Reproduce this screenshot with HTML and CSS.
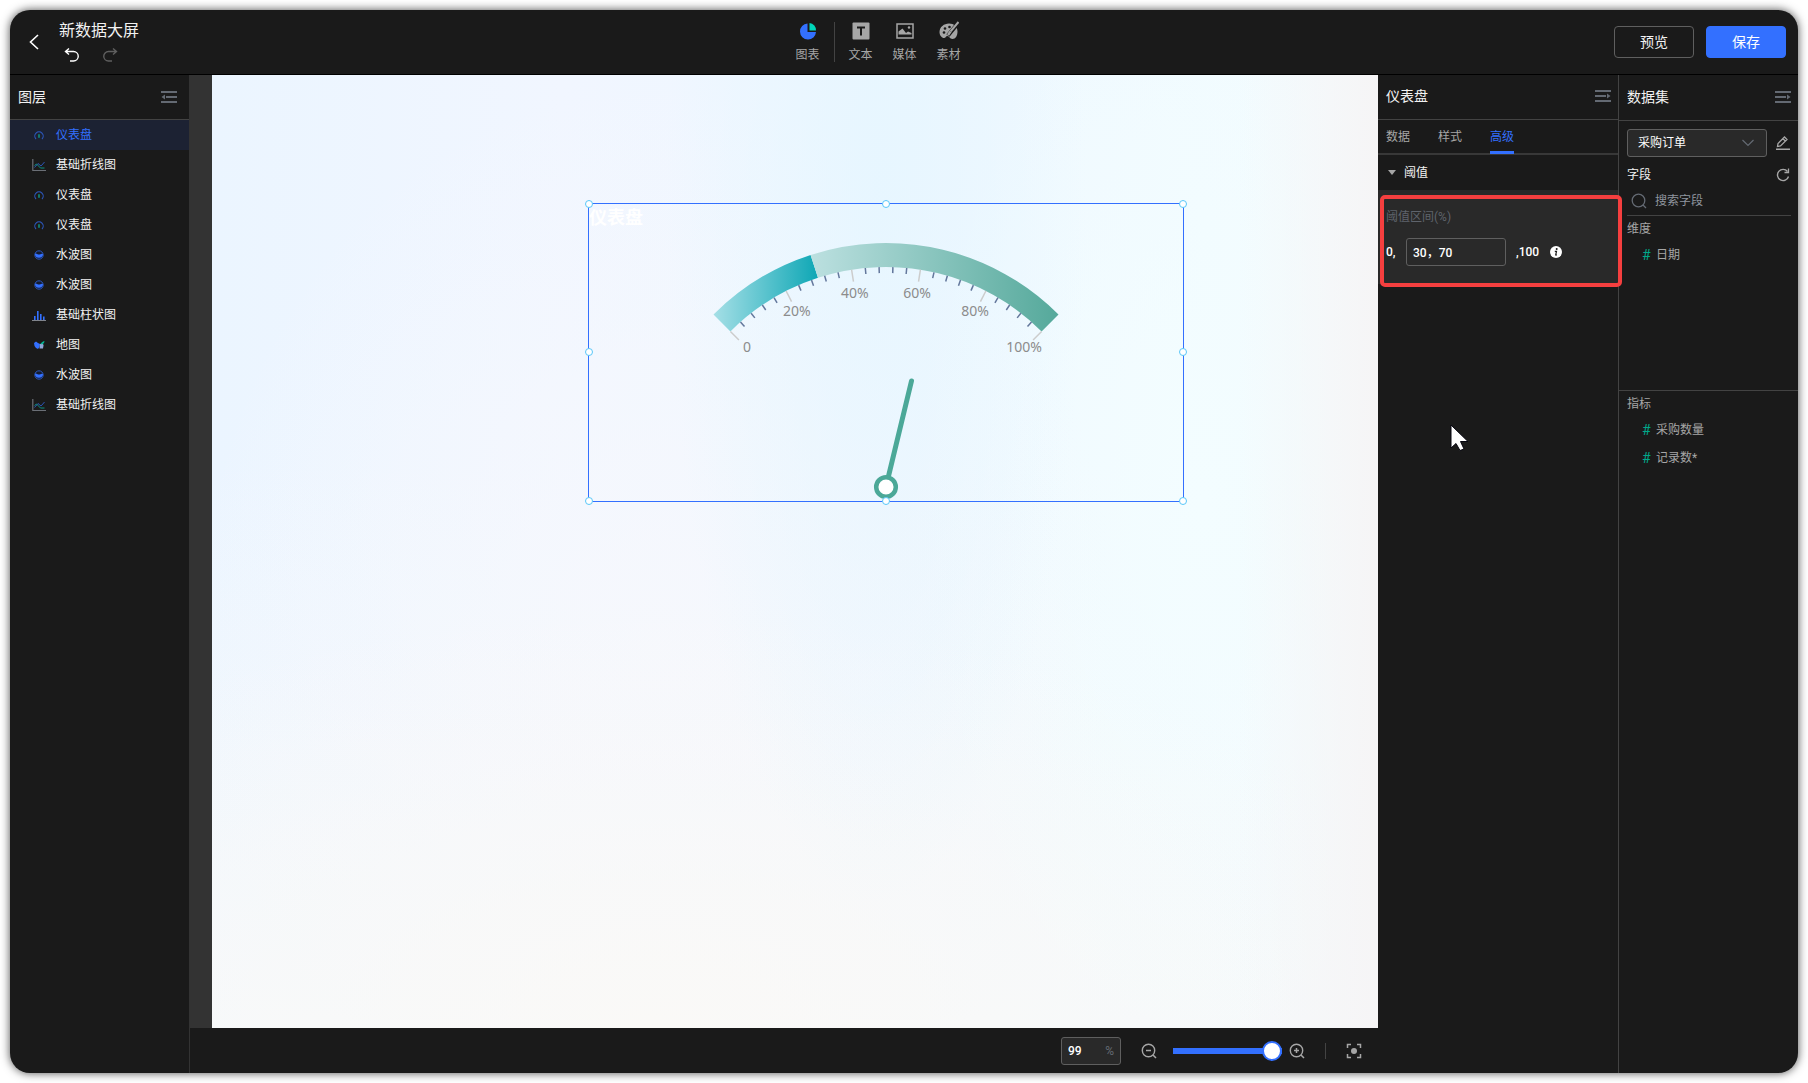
FILE: index.html
```html
<!DOCTYPE html>
<html lang="zh-CN">
<head>
<meta charset="utf-8">
<title>新数据大屏</title>
<link rel="stylesheet" href="styles.css">
</head>
<body>
<svg class="sprite" aria-hidden="true">
  <defs>
    <symbol id="i-gauge" viewBox="0 0 14 14"><path d="M4 11A4.200 4.200 0 1 1 10 11" fill="none" stroke="#2c58c0" stroke-width="1.100"/><path d="M6.200 6.200h1.600v3.500H6.200z" fill="#0f8f80"/></symbol>
    <symbol id="i-line" viewBox="0 0 14 14"><path d="M.8 1v11.500H14" fill="none" stroke="#6b6f76" stroke-width="1.200"/><path d="M2.500 9.500 6 5.500l3 2.500L12.500 4" fill="none" stroke="#2c56b8"/><path d="M2.500 7.500 4.500 6l4 4h4" fill="none" stroke="#0f8f80"/></symbol>
    <symbol id="i-water" viewBox="0 0 14 14"><circle cx="7" cy="7" r="4.200" fill="#141c33" stroke="#2c56b8"/><path d="M3 5.500c2-.5 2.500 1.500 4.500 1S10 5.500 11 6A4 4 0 1 1 3 5.500z" fill="#3370ff"/></symbol>
    <symbol id="i-bar" viewBox="0 0 14 14"><path d="M2 8h1.600v4H2zM5 3h1.600v9H5zM8 6h1.600v6H8zM11 8.500h1.600V12H11z" fill="#3370ff"/><path d="M0 12.500h14" stroke="#80848c"/></symbol>
    <symbol id="i-map" viewBox="0 0 14 14"><path d="M2 5l2-1.500 2 1.500 2 1-.5 3-1.500 2-2-1L2.500 8z" fill="#3370ff"/><path d="M8 6l3-.5.500 2-.5 3H7.500z" fill="#8fa8d8"/><path d="M8.500 5.500 11 3.500l1.500-.5-.5 2-2 1.500z" fill="#00b894"/></symbol>
    <symbol id="i-fold" viewBox="0 0 16 14"><path d="M0 2h16M5 7h11M0 12h16" stroke="#646a73" stroke-width="2"/><path d="M.5 7l3.500-2.500v5z" fill="#646a73"/></symbol>
    <symbol id="i-unfold" viewBox="0 0 16 14"><path d="M0 2h16M0 7h11M0 12h16" stroke="#646a73" stroke-width="2"/><path d="M15.500 7 12 4.500v5z" fill="#646a73"/></symbol>
  </defs>
</svg>
<div class="app">
  <header class="topbar">
    <div class="topbar-left">
      <button class="icon-btn" aria-label="返回"><svg width="12" height="18" viewBox="0 0 12 18"><path d="M10 2 2.500 9l7.500 7" fill="none" stroke="#fff" stroke-width="1.600"/></svg></button>
      <div class="title-block">
        <h1>新数据大屏</h1>
        <div class="history">
          <button class="icon-btn" aria-label="撤销"><svg width="16" height="16" viewBox="0 0 16 16"><path d="M5 1.500 1.500 4.500 5 7.500M1.500 4.500H9.500a4.700 4.700 0 0 1 0 9.500H6" fill="none" stroke="#fff" stroke-width="1.400"/></svg></button>
          <button class="icon-btn" aria-label="重做"><svg width="16" height="16" viewBox="0 0 16 16"><path d="M11 1.500 14.500 4.500 11 7.500M14.500 4.500H6.500a4.700 4.700 0 0 0 0 9.500H10" fill="none" stroke="#5f5f5f" stroke-width="1.400"/></svg></button>
        </div>
      </div>
    </div>
    <nav class="tools">
      <button class="tool"><svg width="20" height="20" viewBox="0 0 20 20"><path d="M9.500 2.500a8 8 0 1 0 8.500 8.500H9.500z" fill="#3370ff"/><path d="M11.500 2v7.500H18A7 7 0 0 0 11.500 2z" fill="#00d6b9"/></svg>图表</button>
      <span class="tools-divider"></span>
      <button class="tool"><svg width="20" height="20" viewBox="0 0 20 20"><rect x="1.500" y="1.500" width="17" height="17" rx="1" fill="#a6a6a6"/><path d="M6 6.500h8M10 6.500V14.500" stroke="#1a1a1a" stroke-width="2"/></svg>文本</button>
      <button class="tool"><svg width="20" height="20" viewBox="0 0 20 20"><rect x="2" y="3" width="16" height="14" fill="none" stroke="#a6a6a6" stroke-width="1.500"/><path d="M3.500 13.500V10.500L7.500 7.500l3.500 4.500 2-1.500 3.500 1.500v1.500z" fill="#a6a6a6"/><circle cx="14" cy="6.500" r="1.200" fill="#a6a6a6"/></svg>媒体</button>
      <button class="tool"><svg width="20" height="20" viewBox="0 0 20 20"><path d="M10 2.500C5 2.500.500 6 .500 11c0 3.500 2.500 6 4.500 6s1.500-2 3.500-2 2 3 5 3c3 0 5-3 5-7.500S15 2.500 10 2.500z" fill="#a6a6a6"/><path d="M20 1 11 12l-2 2.500" stroke="#1a1a1a" stroke-width="4"/><path d="M19.500 1 11.500 10.500" stroke="#a6a6a6" stroke-width="2"/><path d="M11.500 10.500 9 14" stroke="#a6a6a6" stroke-width="2.500"/><circle cx="5" cy="11.500" r="1.300" fill="#1a1a1a"/><circle cx="6" cy="7.500" r="1.300" fill="#1a1a1a"/><circle cx="10.500" cy="6" r="1.300" fill="#1a1a1a"/></svg>素材</button>
    </nav>
    <div class="actions">
      <button class="btn">预览</button>
      <button class="btn btn-primary">保存</button>
    </div>
  </header>

  <div class="body">
    <aside class="panel layers">
      <div class="panel-head"><h2>图层</h2><button class="icon-btn" aria-label="收起图层"><svg width="16" height="14"><use href="#i-fold"/></svg></button></div>
      <ul class="layer-list">
        <li class="active"><svg width="14" height="14"><use href="#i-gauge"/></svg>仪表盘</li>
        <li><svg width="14" height="14"><use href="#i-line"/></svg>基础折线图</li>
        <li><svg width="14" height="14"><use href="#i-gauge"/></svg>仪表盘</li>
        <li><svg width="14" height="14"><use href="#i-gauge"/></svg>仪表盘</li>
        <li><svg width="14" height="14"><use href="#i-water"/></svg>水波图</li>
        <li><svg width="14" height="14"><use href="#i-water"/></svg>水波图</li>
        <li><svg width="14" height="14"><use href="#i-bar"/></svg>基础柱状图</li>
        <li><svg width="14" height="14"><use href="#i-map"/></svg>地图</li>
        <li><svg width="14" height="14"><use href="#i-water"/></svg>水波图</li>
        <li><svg width="14" height="14"><use href="#i-line"/></svg>基础折线图</li>
      </ul>
    </aside>

    <main class="stage">
      <div class="stage-view">
        <div class="canvas">
          <section class="chart">
            <h3>仪表盘</h3>
            <svg class="gauge" viewBox="0 0 596 299" role="img" aria-label="仪表盘">
              <defs>
                <linearGradient id="g1"><stop offset="0" stop-color="#a5dfe6"/><stop offset="1" stop-color="#0ea7b5"/></linearGradient>
                <linearGradient id="g2"><stop offset="0" stop-color="#bce0e0"/><stop offset="1" stop-color="#55a99b"/></linearGradient>
              </defs>
              <g transform="translate(298 284)">
                <path d="M-172.500-172.500A244 244 0 0 1-75.400-232.100L-68-209.200A220 220 0 0 0-155.600-155.600z" fill="url(#g1)"/>
                <path d="M-75.400-232.100A244 244 0 0 1 172.500-172.500L155.600-155.600A220 220 0 0 0-68-209.200z" fill="url(#g2)"/>
                <g id="ticks"></g>
                <g class="gauge-labels">
                  <text x="-143" y="-135">0</text>
                  <text x="-103" y="-171">20%</text>
                  <text x="-45" y="-189">40%</text>
                  <text class="end" x="45" y="-189">60%</text>
                  <text class="end" x="103" y="-171">80%</text>
                  <text class="end" x="156" y="-135">100%</text>
                </g>
                <path d="M2.700-11.700 25.500-106" stroke="#4ba898" stroke-width="5" stroke-linecap="round"/>
                <circle r="9.800" fill="#fff" stroke="#4ba898" stroke-width="4.500"/>
              </g>
            </svg>
            <i class="handle n w"></i><i class="handle n c"></i><i class="handle n e"></i>
            <i class="handle m w"></i><i class="handle m e"></i>
            <i class="handle s w"></i><i class="handle s c"></i><i class="handle s e"></i>
          </section>
        </div>
      </div>
      <footer class="zoombar">
        <label class="zoom-field"><input type="text" value="99" aria-label="缩放比例"><span>%</span></label>
        <button class="icon-btn" aria-label="缩小"><svg width="16" height="16" viewBox="0 0 16 16"><circle cx="7.500" cy="7.500" r="6.200" fill="none" stroke="#a6a6a6" stroke-width="1.400"/><path d="M5 7.500h5M12 12l3 3" stroke="#a6a6a6" stroke-width="1.500"/></svg></button>
        <input class="zoom-range" type="range" min="10" max="100" value="100" aria-label="缩放">
        <button class="icon-btn" aria-label="放大"><svg width="16" height="16" viewBox="0 0 16 16"><circle cx="7.500" cy="7.500" r="6.200" fill="none" stroke="#a6a6a6" stroke-width="1.400"/><path d="M5 7.500h5M7.500 5v5M12 12l3 3" stroke="#a6a6a6" stroke-width="1.500"/></svg></button>
        <span class="zoom-divider"></span>
        <button class="icon-btn" aria-label="适应画布"><svg width="16" height="16" viewBox="0 0 16 16"><path d="M1.500 5V1.500H5M11 1.500h3.500V5M14.500 11v3.500H11M5 14.500H1.500V11" fill="none" stroke="#a6a6a6" stroke-width="1.500"/><circle cx="8" cy="8" r="3" fill="#a6a6a6"/></svg></button>
      </footer>
    </main>

    <aside class="panel props">
      <div class="panel-head"><h2>仪表盘</h2><button class="icon-btn" aria-label="收起属性"><svg width="16" height="14"><use href="#i-unfold"/></svg></button></div>
      <div class="tabs" role="tablist">
        <button role="tab">数据</button>
        <button role="tab">样式</button>
        <button role="tab" class="active" aria-selected="true">高级</button>
      </div>
      <button class="group-head"><i class="caret"></i>阈值</button>
      <div class="group-body">
        <label for="range">阈值区间(%)</label>
        <div class="range-row">
          <span>0,</span>
          <input id="range" type="text" value="30，70">
          <span>,100</span>
          <svg width="12" height="12" viewBox="0 0 12 12"><circle cx="6" cy="6" r="6" fill="#fff"/><circle cx="6.700" cy="3" r="1" fill="#1a1a1a"/><path d="M4.800 5.300h1.700L5.700 9h1.300" fill="none" stroke="#1a1a1a" stroke-width="1.200"/></svg>
        </div>
        <div class="callout"></div>
      </div>
    </aside>

    <aside class="panel dataset">
      <div class="panel-head"><h2>数据集</h2><button class="icon-btn" aria-label="收起数据集"><svg width="16" height="14"><use href="#i-unfold"/></svg></button></div>
      <div class="source-row">
        <div class="select">
          <select aria-label="数据集"><option>采购订单</option></select>
          <svg width="12" height="8" viewBox="0 0 12 8"><path d="M.5 1 6 6.500 11.500 1" fill="none" stroke="#646a73" stroke-width="1.200"/></svg>
        </div>
        <button class="icon-btn" aria-label="编辑"><svg width="14" height="14" viewBox="0 0 14 14"><path d="M0 13.200h14" stroke="#a6a6a6" stroke-width="1.500"/><path d="M1.500 10.500 2 7.500 8.500 1l2.500 2.500L4.500 10zM7 2.800l2.500 2.400" fill="none" stroke="#a6a6a6" stroke-width="1.300"/></svg></button>
      </div>
      <div class="field-row">
        <span>字段</span>
        <button class="icon-btn" aria-label="刷新"><svg width="14" height="14" viewBox="0 0 14 14"><path d="M11.500 3.500A5.600 5.600 0 1 0 12.500 8.500" fill="none" stroke="#a6a6a6" stroke-width="1.400"/><path d="M8.500 4.500h4V.500" fill="none" stroke="#a6a6a6" stroke-width="1.300"/></svg></button>
      </div>
      <div class="search">
        <svg width="16" height="16" viewBox="0 0 16 16"><circle cx="7.500" cy="7.500" r="6.300" fill="none" stroke="#646a73" stroke-width="1.300"/><path d="m12 12 3 3" stroke="#646a73" stroke-width="1.300"/></svg>
        <input type="text" placeholder="搜索字段" aria-label="搜索字段">
      </div>
      <section class="fields dims">
        <h3>维度</h3>
        <ul><li><b>#</b>日期</li></ul>
      </section>
      <section class="fields metrics">
        <h3>指标</h3>
        <ul><li><b>#</b>采购数量</li><li><b>#</b>记录数*</li></ul>
      </section>
    </aside>
  </div>
</div>
<svg class="pointer" width="18" height="28" viewBox="0 0 18 28" aria-hidden="true"><path d="M1 1v23l5-4.500 4 7 4-1.500-3.500-7.500H18z" fill="#fff" stroke="#05050f"/></svg>
<script src="gauge.js"></script>
</body>
</html>
```
FILE: styles.css
```css
* { box-sizing: border-box; }

body {
  margin: 0;
  padding: 10px;
  height: 100vh;
  background: #fff;
  color: #f2f2f2;
  font: 12px/20px Roboto, "Noto Sans CJK SC", sans-serif;
}

h1, h2, h3, ul { margin: 0; padding: 0; font-weight: 400; list-style: none; }
button, input, select { font: inherit; color: inherit; }
button { background: none; border: 0; padding: 0; }
svg { display: block; flex: none; }

.sprite { position: absolute; width: 0; height: 0; }

.app {
  height: 100%;
  display: flex;
  flex-direction: column;
  background: #1a1a1a;
  border-radius: 20px;
  overflow: hidden;
  box-shadow: 0 0 10px rgba(0, 0, 0, .7);
}

/* Top bar */
.topbar {
  flex: none;
  height: 65px;
  display: grid;
  grid-template-columns: 1fr auto 1fr;
  align-items: center;
  padding: 0 12px 0 18px;
  border-bottom: 1px solid #000;
}
.topbar-left { display: flex; align-items: center; gap: 19px; }
.title-block { padding-bottom: 2px; }
.title-block h1 { font-size: 16px; line-height: 24px; }
.history { display: flex; gap: 22px; padding: 4px 5px 0; }
.tools { display: flex; align-items: center; padding-right: 58px; gap: 20px; }
.tool {
  width: 24px;
  display: flex;
  flex-direction: column;
  align-items: center;
  gap: 4px;
  padding-top: 2px;
  color: #a6a6a6;
  white-space: nowrap;
}
.tools-divider { width: 1px; height: 40px; margin: 0 -6px; background: #434343; }
.actions { display: flex; justify-content: flex-end; gap: 12px; }
.btn {
  width: 80px;
  height: 32px;
  border: 1px solid #5f5f5f;
  border-radius: 4px;
  font-size: 14px;
}
.btn-primary { background: #3370ff; border-color: #3370ff; color: #fff; }

/* Columns */
.body { flex: 1; min-height: 0; display: flex; }
.panel { flex: none; }
.panel-head {
  height: 45px;
  display: flex;
  align-items: center;
  justify-content: space-between;
  padding: 0 8px;
  border-bottom: 1px solid #434343;
}
.panel-head h2 { font-size: 14px; }

/* Layers */
.layers { width: 180px; border-right: 1px solid #333; }
.layers .panel-head { padding-right: 12px; }
.layer-list li {
  height: 30px;
  display: flex;
  align-items: center;
  gap: 10px;
  padding-left: 22px;
}
.layer-list .active { background: #1c2233; color: #3370ff; }

/* Canvas */
.stage { flex: 1; min-width: 0; display: flex; flex-direction: column; }
.stage-view { flex: 1; min-height: 0; display: flex; padding-left: 22px; background: #333; }
.canvas {
  position: relative;
  flex: 1;
  background:
    radial-gradient(ellipse 18% 75% at 57% 12%, rgba(230, 246, 255, .9), rgba(230, 246, 255, 0)),
    linear-gradient(to right, rgba(246, 245, 246, 0) 88%, #f6f5f6),
    radial-gradient(ellipse 70% 45% at 38% 100%, #faf9f7, rgba(250, 249, 247, 0)),
    radial-gradient(ellipse 40% 60% at 38% 60%, #f6f8fd, rgba(246, 248, 253, 0)),
    radial-gradient(ellipse 25% 60% at 85% 45%, #f3fdff, rgba(243, 253, 255, 0)),
    linear-gradient(to bottom, rgba(245, 249, 252, 0) 40%, #f5f9fc),
    linear-gradient(to right, #ebf5ff, #f1f6ff 30%, #eef7ff 60%, #f1fbff 85%, #f4fcff);
}
.chart {
  position: absolute;
  left: 376px;
  top: 128px;
  width: 596px;
  height: 299px;
  border: 1px solid #3370ff;
}
.chart h3 {
  position: absolute;
  left: 0;
  top: 0;
  font-size: 18px;
  line-height: 28px;
  font-weight: 700;
  color: #fff;
}
.gauge { position: absolute; left: -1px; top: -1px; width: 596px; height: 299px; }
.gauge-labels { font: 14px "Noto Sans", sans-serif; fill: #8c8c8c; }
.gauge-labels .end { text-anchor: end; }
.tick { stroke: #63779c; stroke-width: 1.5; }
.split { stroke: #ccc; stroke-width: 1.5; }

.handle {
  position: absolute;
  width: 8px;
  height: 8px;
  border: 1px solid #59c7f9;
  border-radius: 50%;
  background: #fff;
}
.handle.n { top: -4px; }
.handle.m { top: calc(50% - 5px); }
.handle.s { bottom: -4px; }
.handle.w { left: -4px; }
.handle.c { left: calc(50% - 4px); }
.handle.e { right: -4px; }

/* Zoom bar */
.zoombar {
  flex: none;
  height: 45px;
  display: flex;
  align-items: center;
  justify-content: flex-end;
  padding-right: 16px;
}
.zoom-field {
  width: 60px;
  height: 28px;
  display: flex;
  align-items: center;
  justify-content: space-between;
  margin-right: 20px;
  padding: 0 6px;
  background: #292929;
  border: 1px solid #5f5f5f;
  border-radius: 3px;
  color: #646a73;
}
.zoom-field input {
  width: 30px;
  padding: 0;
  border: 0;
  background: none;
  color: #fff;
  font-weight: 500;
}
.zoom-range {
  appearance: none;
  width: 109px;
  height: 20px;
  margin: 0 7px 0 16px;
  background: linear-gradient(#3370ff, #3370ff) center / 100% 6px no-repeat;
  border-radius: 3px;
}
.zoom-range::-webkit-slider-thumb {
  appearance: none;
  width: 20px;
  height: 20px;
  border: 2px solid #3370ff;
  border-radius: 50%;
  background: #fff;
}
.zoom-divider { width: 1px; height: 16px; margin: 0 20px; background: #434343; }

/* Properties */
.props { width: 241px; border-right: 1px solid #434343; }
.props .panel-head { padding: 0 7px 3px 8px; }
.tabs {
  height: 35px;
  display: flex;
  gap: 28px;
  padding: 0 8px;
  border-bottom: 2px solid #383838;
  color: #a6a6a6;
}
.tabs button { height: 34px; padding-top: 3px; border-bottom: 3px solid transparent; }
.tabs .active { color: #3370ff; border-color: #3370ff; }
.group-head {
  width: 100%;
  height: 35px;
  display: flex;
  align-items: center;
  gap: 8px;
  padding: 0 10px;
}
.caret { border: 4px solid transparent; border-top: 5px solid #a6a6a6; border-bottom: 0; }
.group-body {
  position: relative;
  height: 94px;
  padding: 17px 8px;
  background: #292929;
}
.group-body label { display: block; color: #5f646c; }
.range-row { display: flex; align-items: center; margin-top: 11px; font-weight: 500; color: #fff; }
.range-row span:first-child { width: 20px; }
.range-row input {
  width: 100px;
  height: 28px;
  margin-right: 10px;
  padding: 0 6px 2px;
  background: #292929;
  border: 1px solid #5f5f5f;
  border-radius: 3px;
}
.range-row svg { margin-left: 11px; }
.callout {
  position: absolute;
  inset: 5px -4px -3px 2px;
  border: 4px solid #f53f3f;
  border-radius: 5px;
}

/* Data set */
.dataset { width: 179px; }
.dataset .panel-head { height: 46px; padding: 0 7px 2px 8px; }
.source-row { display: flex; align-items: center; justify-content: space-between; padding: 8px; }
.select { position: relative; width: 140px; }
.select select {
  appearance: none;
  display: block;
  width: 100%;
  height: 28px;
  padding: 0 10px;
  border: 1px solid #5f5f5f;
  border-radius: 3px;
  background: #292929;
  color: #fff;
}
.select svg { position: absolute; right: 13px; top: 10px; pointer-events: none; }
.field-row { display: flex; align-items: center; justify-content: space-between; padding: 0 8px; }
.search {
  height: 31px;
  display: flex;
  align-items: center;
  gap: 8px;
  margin: 0 7px 0 8px;
  padding: 2px 4px 0;
  border-bottom: 1px solid #434343;
}
.search input { flex: 1; min-width: 0; padding: 0; border: 0; background: none; }
.search input::placeholder { color: #8f959e; }
.fields { color: #a6a6a6; }
.fields h3 { padding: 3px 8px 2px; font-size: 12px; }
.fields li { height: 28px; display: flex; align-items: center; gap: 6px; padding-left: 23px; }
.fields b { width: 8px; font-size: 14px; font-weight: 400; color: #00a88a; }
.dims { height: 174px; }
.metrics { border-top: 1px solid #434343; }

.pointer { position: absolute; left: 1450px; top: 424px; }
```
FILE: gauge.js
```js
// Scale of the gauge: 25 steps over 90 degrees, every fifth one a split line.
const ticks = document.getElementById('ticks');
for (let i = 0; i <= 25; i++) {
  const major = i % 5 === 0;
  const line = document.createElementNS('http://www.w3.org/2000/svg', 'line');
  line.setAttribute('class', major ? 'split' : 'tick');
  line.setAttribute('y1', -220);
  line.setAttribute('y2', major ? -208 : -214);
  line.setAttribute('transform', `rotate(${-45 + i * 3.6})`);
  ticks.appendChild(line);
}
```
